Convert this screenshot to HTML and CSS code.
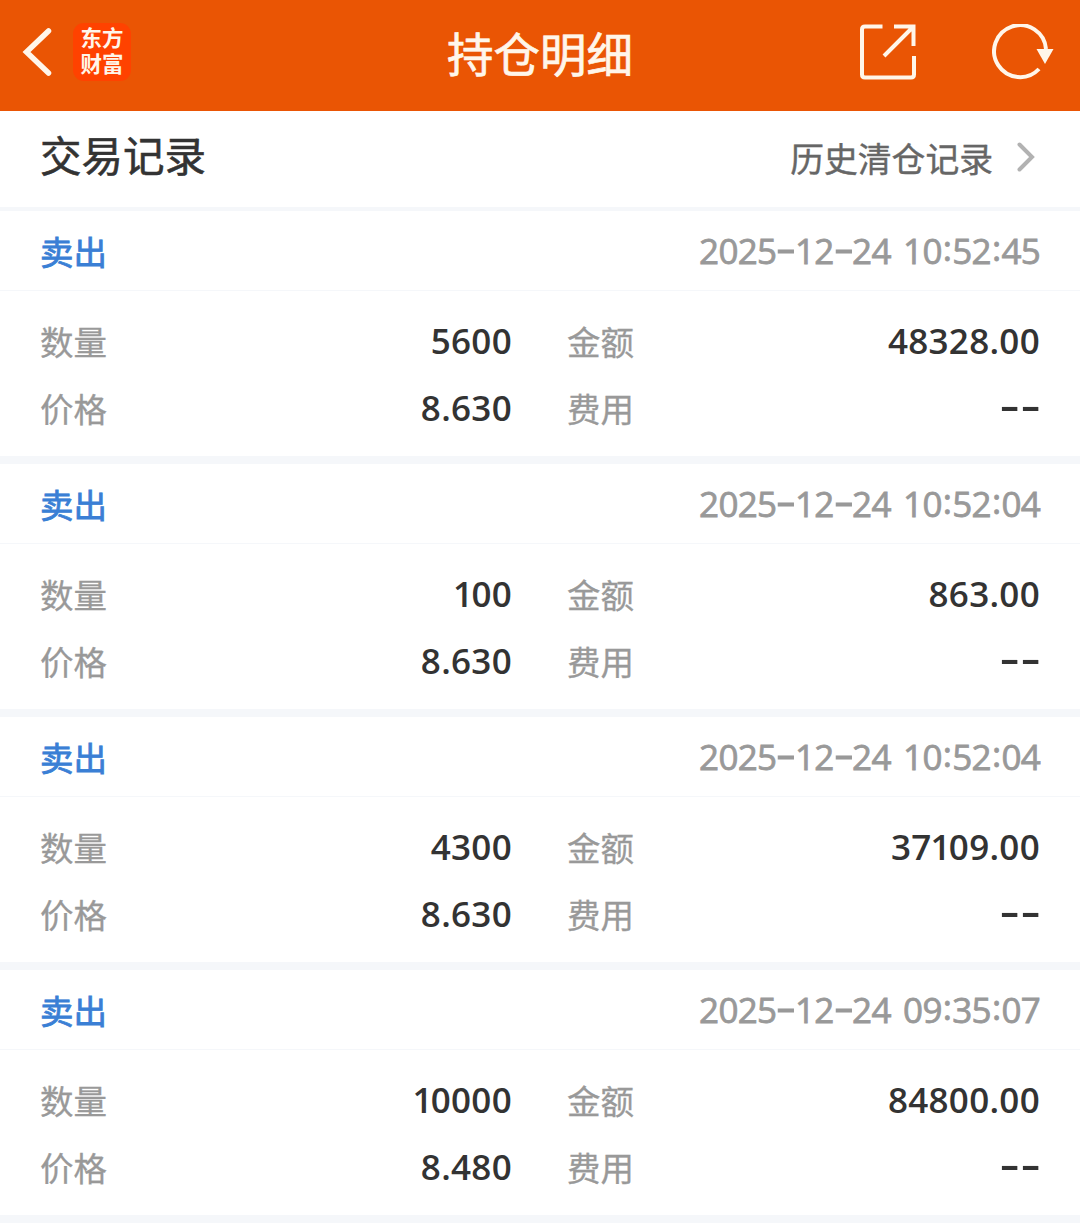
FILE: index.html
```html
<!DOCTYPE html>
<html lang="zh-CN">
<head>
  <meta charset="UTF-8" />
  <meta name="viewport" content="width=device-width, initial-scale=1.0"/>
  <title>持仓明细</title>
  <link rel="stylesheet" href="styles.css">
</head>
<body>
  <header class="navbar">
    <div class="nav-left">
      <svg class="icon-back" width="30" height="52" viewBox="0 0 30 52"><path d="M26.5 5 L4.5 26 L26.5 47"/></svg>
      <div class="logo">东方<br>财富</div>
    </div>
    <h1>持仓明细</h1>
    <div class="nav-right">
      <svg width="56" height="56" viewBox="0 0 56 56">
        <path d="M22.5 2.5 H5 Q2 2.5 2 5.5 V50.5 Q2 53.5 5 53.5 H51 Q54 53.5 54 50.5 V32"/>
        <path d="M34 2.5 H53.5 V22 M53.5 2.5 L24 32"/>
      </svg>
      <svg width="64" height="56" viewBox="0 0 64 56">
        <path d="M54 25 A26 26 0 1 0 47 45"/>
        <path class="arrow" d="M44.5 25 H61.5 L53 40 Z"/>
      </svg>
    </div>
  </header>

  <div class="section-title">
    <h2>交易记录</h2>
    <a class="history" href="#">历史清仓记录
      <svg width="18" height="30" viewBox="0 0 18 30"><path d="M2.5 2.5 L15 15 L2.5 27.5"/></svg>
    </a>
  </div>

  <section class="record">
    <div class="record-head"><span class="side">卖出</span><time>2025<i>-</i>12<i>-</i>24 10<u>:</u>52<u>:</u>45</time></div>
    <div class="record-body">
      <div class="cell"><label>数量</label><b>5600</b></div>
      <div class="cell"><label>金额</label><b>48328.00</b></div>
      <div class="cell"><label>价格</label><b>8.630</b></div>
      <div class="cell"><label>费用</label><b class="empty"><i>-</i><i>-</i></b></div>
    </div>
  </section>

  <section class="record">
    <div class="record-head"><span class="side">卖出</span><time>2025<i>-</i>12<i>-</i>24 10<u>:</u>52<u>:</u>04</time></div>
    <div class="record-body">
      <div class="cell"><label>数量</label><b><span class="one">1</span>00</b></div>
      <div class="cell"><label>金额</label><b>863.00</b></div>
      <div class="cell"><label>价格</label><b>8.630</b></div>
      <div class="cell"><label>费用</label><b class="empty"><i>-</i><i>-</i></b></div>
    </div>
  </section>

  <section class="record">
    <div class="record-head"><span class="side">卖出</span><time>2025<i>-</i>12<i>-</i>24 10<u>:</u>52<u>:</u>04</time></div>
    <div class="record-body">
      <div class="cell"><label>数量</label><b>4300</b></div>
      <div class="cell"><label>金额</label><b>37<span class="one">1</span>09.00</b></div>
      <div class="cell"><label>价格</label><b>8.630</b></div>
      <div class="cell"><label>费用</label><b class="empty"><i>-</i><i>-</i></b></div>
    </div>
  </section>

  <section class="record">
    <div class="record-head"><span class="side">卖出</span><time>2025<i>-</i>12<i>-</i>24 09<u>:</u>35<u>:</u>07</time></div>
    <div class="record-body">
      <div class="cell"><label>数量</label><b><span class="one">1</span>0000</b></div>
      <div class="cell"><label>金额</label><b>84800.00</b></div>
      <div class="cell"><label>价格</label><b>8.480</b></div>
      <div class="cell"><label>费用</label><b class="empty"><i>-</i><i>-</i></b></div>
    </div>
  </section>
</body>
</html>
```
FILE: styles.css
```css
* {
  box-sizing: border-box;
}
body {
  margin: 0;
  background-color: #fff;
  color: #333;
  font-family: 'Noto Sans CJK SC', sans-serif;
  font-size: 33.5px;
}
svg {
  display: block;
  fill: none;
  stroke: #fff6ea;
  stroke-width: 4;
}

/* top bar */
.navbar {
  display: grid;
  grid-template-columns: 1fr auto 1fr;
  align-items: center;
  height: 111px;
  padding: 0 24px 7px 22px;
  background-color: #ea5504;
  color: #fff6ea;
}
.nav-left,
.nav-right {
  display: flex;
  align-items: center;
}
.nav-left {
  gap: 21px;
}
.nav-right {
  justify-content: flex-end;
  gap: 76px;
}
.icon-back {
  stroke-width: 5.5;
  stroke-linecap: round;
}
.arrow {
  fill: #fff6ea;
  stroke: none;
}
.logo {
  width: 58px;
  height: 58px;
  padding-top: 1px;
  border-radius: 11px;
  background-color: #ff4200;
  font-size: 21.5px;
  font-weight: 700;
  line-height: 26px;
  text-align: center;
}
h1 {
  margin: 0 0 0 2px;
  font-size: 46.5px;
  font-weight: 400;
  line-height: 60px;
  -webkit-text-stroke: 0.7px;
}

.section-title {
  display: flex;
  justify-content: space-between;
  align-items: center;
  height: 100px;
  padding: 0 45px 4px 40px;
  border-bottom: 4px solid #f5f7fa;
}
h2 {
  margin: 0 0 6px;
  font-size: 41.5px;
  font-weight: 400;
  line-height: 60px;
  -webkit-text-stroke: 0.6px;
}
.history {
  display: flex;
  align-items: center;
  gap: 24px;
  color: #666;
  font-size: 33.8px;
  text-decoration: none;
  -webkit-text-stroke: 0.4px;
}
.history svg {
  stroke: #b2b2b2;
  stroke-linecap: round;
}

.record {
  height: 253px;
  border-bottom: 8px solid #f5f7fa;
}
.record-head {
  display: flex;
  justify-content: space-between;
  align-items: center;
  height: 80px;
  padding: 0 40px;
  border-bottom: 1px solid #f5f7fa;
}
.side {
  color: #3a7fd5;
  -webkit-text-stroke: 0.8px;
}
time {
  color: #999;
  font-family: 'Open Sans', sans-serif;
  font-size: 35px;
  letter-spacing: -0.7px;
  word-spacing: 4px;
  -webkit-text-stroke: 0.8px;
}
.record-body {
  display: grid;
  grid-template-columns: 472px 473px;
  grid-auto-rows: 67px;
  column-gap: 55px;
  padding: 16px 40px 0;
}
.cell {
  display: flex;
  justify-content: space-between;
  align-items: center;
}
label {
  color: #999;
  -webkit-text-stroke: 0.3px;
}
b {
  font-family: 'Open Sans', sans-serif;
  font-size: 35px;
  font-weight: 600;
  letter-spacing: 0.3px;
}
.one {
  margin: 0 -2px 0 -1px;
}
/* wide dash */
i {
  display: inline-block;
  font-style: normal;
  transform: translateY(-4px) scale(1.75, 1.2);
  margin: 0 4px;
}
b i {
  margin: 0 5px;
}
.empty {
  margin-right: -2px;
}
/* colon centred on the digits */
u {
  display: inline-block;
  margin: 0 1px;
  text-decoration: none;
  transform: translateY(-3px);
}
```
